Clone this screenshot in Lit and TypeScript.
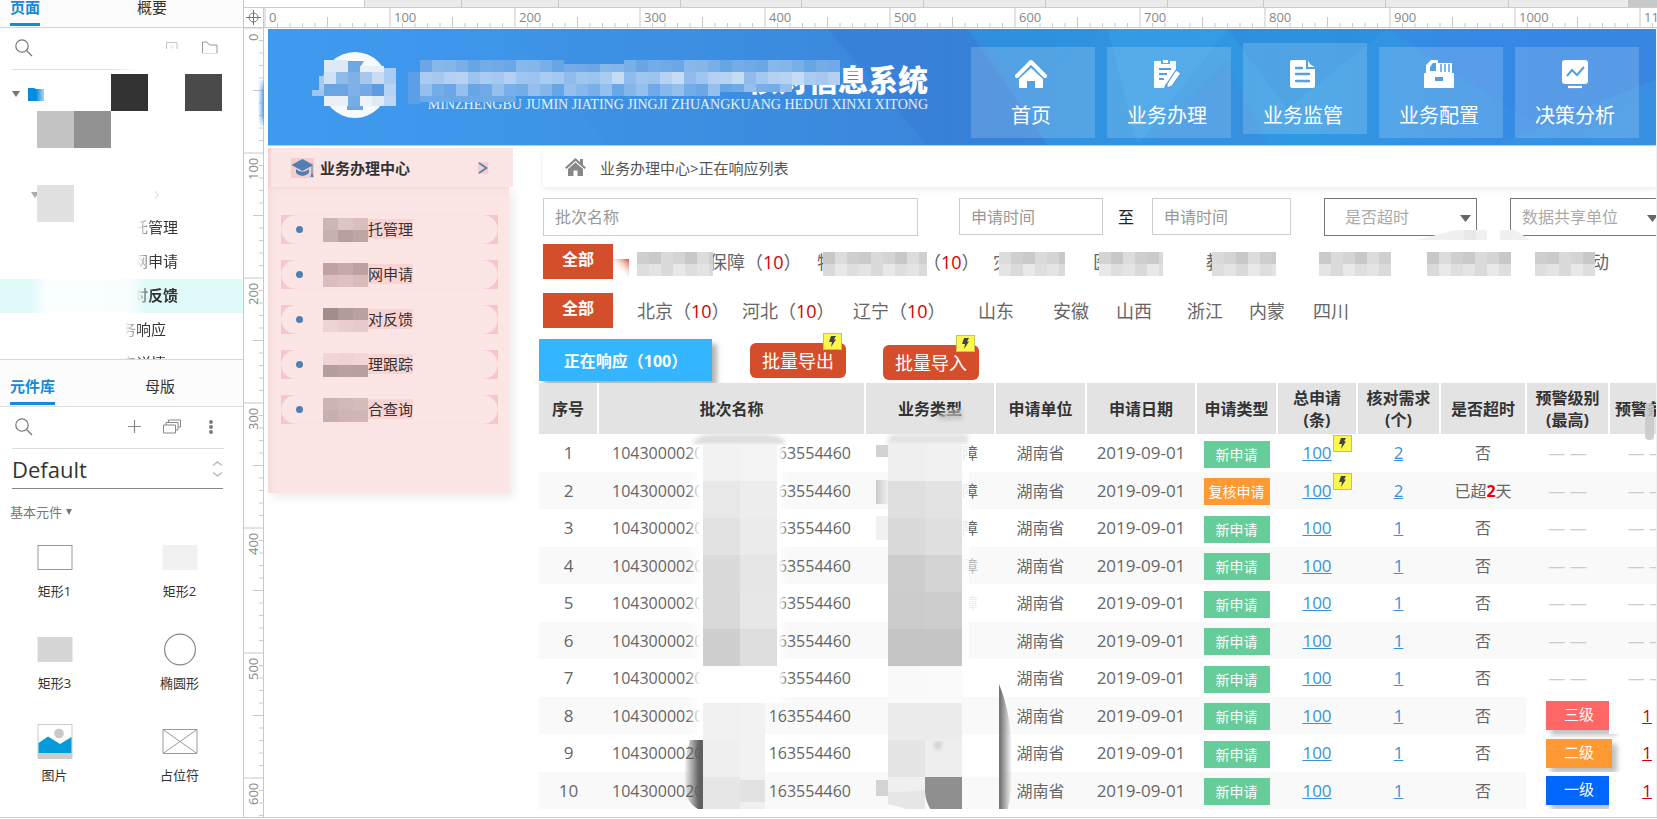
import { LitElement, html, svg, css, nothing } from "lit";
import { customElement } from "lit/decorators.js";
import { classMap } from "lit/directives/class-map.js";
import { styleMap } from "lit/directives/style-map.js";

const base = css`
  :host {
    display: block;
    box-sizing: border-box;
    font-family: "Open Sans", "Noto Sans CJK SC", sans-serif;
  }
  *, *::before, *::after { box-sizing: border-box; }
  button, input, select { font-family: inherit; margin: 0; }
  button { border: 0; padding: 0; background: none; cursor: pointer; }
  svg { display: block; flex: none; }
  ul { list-style: none; margin: 0; padding: 0; }
`;

type Cell = [number, number, number, number, string];
const cells = (list: Cell[]) =>
  list.map(([x, y, w, h, c]) => svg`<rect x=${x} y=${y} width=${w} height=${h} fill=${c}></rect>`);

const searchIcon = html`<svg width="18" height="18" viewBox="0 0 18 18" fill="none" stroke="#777" stroke-width="1.2">
  <circle cx="7" cy="7" r="6.2"></circle><path d="M11.5 11.5L17 17"></path></svg>`;

/* ---------- left side: page tree and widget library ---------- */

@customElement("tool-panels")
class ToolPanels extends LitElement {
  static styles = [base, css`
    :host { display: flex; flex-direction: column; border-right: 1px solid #c9c9c9; background: #fff; overflow: hidden; min-height: 0; }
    .pages { flex: none; height: 360px; overflow: hidden; border-bottom: 1px solid #d8d8d8; }
    .tabs { display: flex; align-items: flex-end; gap: 97px; height: 28px; padding: 0 0 1px 10px; background: #fcfcfc; border-bottom: 1px solid #d6d6d6; overflow: hidden; }
    .tabs.lib { height: 47px; gap: 90px; border-bottom: 1px solid #dedede; }
    .tab { font-size: 15px; line-height: 20px; padding-bottom: 6px; border-bottom: 3px solid transparent; color: #333; }
    .tab.on { color: #148bd6; font-weight: 700; border-bottom-color: #148bd6; }
    .tools { display: flex; align-items: center; height: 41px; padding: 0 24px 2px 15px; }
    .find { margin-right: auto; }
    .tools button + button { margin-left: 22px; }
    .tools .find + button { margin-left: 0; }
    .rule { height: 1px; margin: 0 19px 0 12px; background: #dcdcdc; }
    .rule.fade { background: linear-gradient(to right, #ddd, #ddd 45%, #fff 60%); }
    .tree { position: relative; }
    .root { display: flex; align-items: center; gap: 8px; height: 48px; padding-left: 12px; margin-bottom: 60px; }
    .group { display: flex; align-items: center; height: 33px; padding-left: 31px; }
    .page { display: flex; justify-content: flex-end; align-items: center; height: 34px; padding: 0 65px 4px 0; font-size: 15px; color: #333; }
    .page.near { padding-right: 77px; }
    .page.on { font-weight: 700; background: linear-gradient(to right, #e0f9f9 30px, #fafefe 46px, #f8fefe 130px, #e0f9f9 148px); }
    .name { mask-image: linear-gradient(to right, transparent 4px, #000 20px); }
    .blocks { position: absolute; left: 37px; top: 4px; }
    .library { flex: 1; min-height: 0; }
    .set { display: flex; justify-content: space-between; align-items: center; width: 211px; height: 39px; margin: 1px 20px 0 12px; border-bottom: 1px solid #888; font-size: 22px; color: #333; }
    .section { display: flex; align-items: center; gap: 4px; margin: 14px 0 18px 10px; font-size: 13px; line-height: 18px; color: #777; }
    .grid { display: grid; grid-template-columns: 85px 85px; column-gap: 40px; padding-left: 12px; }
    .widget { display: flex; flex-direction: column; align-items: center; gap: 6px; height: 92px; font-size: 13px; line-height: 18px; color: #333; }
  `];

  render() {
    const shapes = [
      ["矩形1", svg`<rect x="1" y="6.500" width="34" height="24" fill="#fff" stroke="#999"></rect>`],
      ["矩形2", svg`<rect x="0.500" y="6" width="35" height="25" fill="#f1f1f1"></rect>`],
      ["矩形3", svg`<rect x="0.500" y="6" width="35" height="25" fill="#d6d6d6"></rect>`],
      ["椭圆形", svg`<circle cx="18" cy="18.500" r="15.400" fill="#fff" stroke="#888" stroke-width="1.200"></circle>`],
      ["图片", svg`<rect x="1" y="1.500" width="34" height="34" fill="#fff" stroke="#ccc"></rect><rect x="1" y="30" width="34" height="5" fill="#ccc"></rect><circle cx="22" cy="10.500" r="4.800" fill="#c8c8c8"></circle><path d="M1.500 20L11 13.500L23 21L34.500 14V30H1.500Z" fill="#049bdc"></path>`],
      ["占位符", svg`<path d="M1 6.500H35V30.500H1ZL35 30.500M35 6.500L1 30.500" fill="none" stroke="#999"></path>`],
    ] as const;
    const pages = [["托管理", ""], ["网申请", ""], ["对反馈", "on"], ["务响应", "near"], ["申详情", "near"]];
    return html`
      <section class="pages">
        <div class="tabs"><button class="tab on">页面</button><button class="tab">概要</button></div>
        <div class="tools">
          <button class="find" aria-label="搜索页面">${searchIcon}</button>
          <button aria-label="添加页面"><svg width="14" height="14" viewBox="0 0 14 14" fill="none" stroke="#c4c4c4"><path d="M1.500 8V1.500H12V8"></path><path d="M5 6H9M7 4V8" stroke="#e8e8e8"></path></svg></button>
          <button aria-label="添加文件夹"><svg width="18" height="14" viewBox="0 0 18 14" fill="none" stroke="#999"><path d="M1.500 12V1H6L8.500 4H16V12"></path><path d="M1.500 12.500H16" stroke="#ddd"></path></svg></button>
        </div>
        <div class="rule fade"></div>
        <div class="tree">
          <div class="root">
            <svg width="8" height="6" viewBox="0 0 8 6"><path d="M0 0H8L4 6Z" fill="#777"></path></svg>
            <svg width="18" height="13" viewBox="0 0 18 13"><defs><linearGradient id="f"><stop offset=".5" stop-color="#048be0"></stop><stop offset="1" stop-color="#a8d8f5"></stop></linearGradient></defs><path d="M0 0H6L8 1H16V13H0Z" fill="url(#f)"></path></svg>
          </div>
          <div class="group">
            <svg width="8" height="6" viewBox="0 0 8 6"><path d="M0 0H8L4 6Z" fill="#aaa"></path></svg>
            <svg width="124" height="10" viewBox="0 0 124 10"><path d="M116 1L119 5L116 9" fill="none" stroke="#d8d8d8"></path></svg>
          </div>
          <ul>${pages.map(([t, c]) => html`<li class="page ${c}"><span class="name">${t}</span></li>`)}</ul>
          <svg class="blocks" width="185" height="148" viewBox="37 74 185 148">${cells([
            [111, 74, 37, 37, "#333"], [185, 74, 37, 37, "#4a4a4a"], [37, 111, 37, 37, "#c4c4c4"],
            [74, 111, 37, 37, "#929292"], [37, 185, 37, 37, "#e1e1e1"],
          ])}</svg>
        </div>
      </section>
      <section class="library">
        <div class="tabs lib"><button class="tab on">元件库</button><button class="tab">母版</button></div>
        <div class="tools">
          <button class="find" aria-label="搜索元件">${searchIcon}</button>
          <button aria-label="添加"><svg width="13" height="13" viewBox="0 0 13 13" stroke="#888" stroke-width="1.200"><path d="M6.500 0V13M0 6.500H13"></path></svg></button>
          <button aria-label="元件库列表"><svg width="18" height="15" viewBox="0 0 18 15" fill="#fff" stroke="#888"><path d="M5.500 1H17.500V8H5.500Z"></path><path d="M3 3.500H15V11H3Z"></path><path d="M0.500 6H12.500V14H0.500Z"></path></svg></button>
          <button aria-label="更多"><svg width="16" height="14" viewBox="0 0 16 14" fill="#777"><circle cx="8" cy="2" r="1.900"></circle><circle cx="8" cy="7" r="1.900"></circle><circle cx="8" cy="12" r="1.900"></circle></svg></button>
        </div>
        <div class="rule"></div>
        <button class="set">Default
          <svg width="12" height="18" viewBox="0 0 12 18" fill="none" stroke="#bbb" stroke-width="1.500"><path d="M2 5.500L6.500 2L11 5.500M2 12.500L6.500 16L11 12.500"></path></svg>
        </button>
        <div class="section">基本元件<svg width="6" height="6" viewBox="0 0 6 6"><path d="M0 0H6L3 6Z" fill="#777"></path></svg></div>
        <div class="grid">${shapes.map(([t, g]) => html`<div class="widget"><svg width="36" height="37" viewBox="0 0 36 37">${g}</svg>${t}</div>`)}</div>
      </section>`;
  }
}

/* ---------- rulers ---------- */

@customElement("canvas-ruler")
class CanvasRuler extends LitElement {
  static properties = { vertical: { type: Boolean } };
  declare vertical: boolean;
  static styles = [base, css`
    :host { overflow: hidden; background: #fff; }
    text { font-size: 13px; fill: #888; font-family: "Open Sans", sans-serif; }
  `];
  render() {
    const v = this.vertical;
    const count = v ? 66 : 240;
    const start = v ? 0 : 1;
    const marks = [];
    for (let i = 0; i < count; i++) {
      const p = start + i * 12.5;
      const len = i % 10 === 0 ? 20 : i % 5 === 0 ? 11 : 5;
      marks.push(v ? svg`<path d="M${20 - len} ${p}H20"></path>` : svg`<path d="M${p} ${20 - len}V20"></path>`);
    }
    const labels = [];
    for (let n = 0; n * 125 < count * 12.5; n++) {
      const p = start + n * 125 + 4;
      labels.push(v
        ? svg`<text transform="translate(14 ${p + (n === 0 ? 9 : 23)}) rotate(-90)">${n * 100}</text>`
        : svg`<text x=${p} y="14">${n * 100}</text>`);
    }
    const w = v ? 20 : 3000;
    const h = v ? 820 : 20;
    return html`<svg width=${w} height=${h} viewBox="0 0 ${w} ${h}">
      <g stroke="#c8c8c8" fill="none">${marks}<path d=${v ? "M19.500 0V820" : "M0 19.500H3000"}></path></g>${labels}
      ${v ? svg`<defs><linearGradient id="b"><stop offset="0" stop-color="#4b9df0" stop-opacity="0"></stop><stop offset="1" stop-color="#4b9df0"></stop></linearGradient>
        <filter id="s"><feGaussianBlur stdDeviation="0 6"></feGaussianBlur></filter></defs>
        <rect x="14" y="56" width="6" height="38" fill="url(#b)" filter="url(#s)"></rect>` : nothing}
    </svg>`;
  }
}

/* ---------- banner ---------- */

const navIcons = [
  svg`<path d="M2 17L16 3L30 17" fill="none" stroke="#fff" stroke-width="4" stroke-linecap="round" stroke-linejoin="round"></path><path d="M16 9L28 20V29H20V22H12V29H4V20Z" fill="#fff"></path>`,
  svg`<path d="M3 2H10V5H19V2H25V14L14 26L13 29H3Z" fill="#fff"></path><rect x="12" y="1" width="5" height="3" fill="#fff"></rect><path d="M8 10H20M8 15H16M8 20H13" stroke="#56a0e2" stroke-width="2"></path><path d="M25 11L30 14L21 27L16 29L16 25Z" fill="#fff" stroke="#56a0e2" stroke-width="1.200"></path>`,
  svg`<path d="M5 1H19V10H28V27Q28 29 26 29H5Q3 29 3 27V3Q3 1 5 1Z" fill="#fff"></path><path d="M21 1Q22 6 28 8H21Z" fill="#fff"></path><path d="M9 9H15M9 15H22M9 22H22" stroke="#56a0e2" stroke-width="2.400" stroke-linecap="round"></path>`,
  svg`<path d="M3 14V6L8 1H15V4H29V14H31V29H1V14Z" fill="#fff"></path><path d="M18 5V13M22 5V13M26 5V13" stroke="#56a0e2" stroke-width="1.500"></path><path d="M7 12V8L10 4H13V12Z" fill="#56a0e2"></path><rect x="12" y="18" width="8" height="4" fill="#56a0e2"></rect>`,
  svg`<rect x="3" y="1" width="26" height="24" rx="3" fill="#fff"></rect><path d="M8 17L13 11L18 16L25 8" fill="none" stroke="#56a0e2" stroke-width="2"></path><path d="M9 28H23" stroke="#fff" stroke-width="2.200"></path>`,
];

@customElement("site-banner")
class SiteBanner extends LitElement {
  static styles = [base, css`
    :host { position: relative; display: flex; height: 117px; border-bottom: 1px solid #a9d2f5; overflow: hidden;
      background: linear-gradient(to right, #3f9af0, #3c8fe2 30%, #3a86dc 48%, #3192e0 58%, #3099e3 75%, #358ce4 90%, #3689de); }
    .facets { position: absolute; inset: 0; width: 100%; height: 100%; }
    .brand { position: relative; display: flex; align-items: center; gap: 20px; padding: 0 0 4px 44px; }
    .words { width: 512px; padding-top: 6px; color: #fff; text-align: right; }
    .title { margin: 0; font-size: 30px; line-height: 34px; font-weight: 900; }
    .latin { font-family: "Liberation Serif", serif; font-size: 14px; line-height: 16px; white-space: nowrap; color: #e4f0fc; }
    .cover { position: absolute; left: 140px; top: 31px; }
    .nav { position: relative; display: flex; gap: 12px; margin-left: auto; padding: 18px 17px 0 0; }
    .item { display: flex; flex-direction: column; align-items: center; gap: 12px; width: 124px; height: 91px; padding: 12px 4px 0 0;
      font-size: 20px; line-height: 30px; color: #fff; background: rgba(255, 255, 255, .17); text-decoration: none; }
    .item.raised { margin-top: -4px; padding-top: 16px; }
  `];
  render() {
    const tone = ["#6ba7e6", "#79afe8", "#70a9e7", "#84b6ea", "#74ace8", "#86b8eb", "#68a5e5"];
    const pale = ["#a9ccf2", "#b7d3f4", "#9fc6f0", "#a4c8f0", "#c5dcf6", "#9cc3ee", "#b3d0f2", "#8fbcec"];
    const cover: Cell[] = [];
    for (let i = 0; i < 35; i++) {
      const x = 12 + i * 12;
      cover.push([x, i > 11 && i < 17 ? 4 : 0, 12, 12, tone[(i * 5) % 7]]);
      cover.push([x, 12, 12, 13, pale[(i * 3 + (i >> 2)) % 8]]);
      if (i < 31) cover.push([x, 24, 12, i > 24 ? 8 : 12, i % 3 ? tone[(i * 3 + 1) % 7] : "#95bfed"]);
    }
    cover.push([0, 12, 12, 32, "#5c9fe6"]);
    cover.push([12, 36, 96, 6, "#6ea9e7"]);
    return html`
      <svg class="facets" viewBox="0 0 1389 116" preserveAspectRatio="none">
        <path d="M560 0H700L780 116H660Z" fill="#3579d4" opacity=".5"></path>
        <path d="M240 0L340 116H0V0Z" fill="#46a0f2" opacity=".15"></path>
        <path d="M700 0H830L760 60Z" fill="#2b93df" opacity=".6"></path>
        <path d="M840 0H960L870 116Z" fill="#39a6ea" opacity=".4"></path>
        <path d="M960 0H1120L1020 80Z" fill="#2887da" opacity=".4"></path>
        <path d="M880 116L960 30L1000 116Z" fill="#3f86de" opacity=".4"></path>
        <path d="M1120 0H1389V60L1300 116Z" fill="#3a80e4" opacity=".35"></path>
        <path d="M1389 50V116H1230Z" fill="#3c9ce6" opacity=".4"></path>
      </svg>
      <div class="brand">
        <svg width="84" height="68" viewBox="312 51 84 68">
          <circle cx="355" cy="85" r="33" fill="#f7fafd"></circle>
          <path d="M346 61H364L361 66V106H363V110H347V106H350V66Z" fill="#6ea7e2"></path>
          ${cells([
            [324, 60, 24, 12, "#dfe9f6"], [348, 62, 12, 10, "#6ea7e2"], [360, 66, 24, 6, "#e8eff8"],
            [319, 76, 5, 14, "#a6caf0"], [324, 72, 12, 12, "#cfe2f6"], [336, 72, 12, 12, "#8fbbea"], [348, 72, 12, 12, "#7fb0e6"], [360, 72, 12, 12, "#a6c8ec"], [372, 72, 12, 12, "#c8dcf2"], [384, 68, 12, 16, "#a9ccf2"],
            [324, 84, 24, 12, "#6ba5e2"], [348, 84, 12, 12, "#7fb0e8"], [360, 84, 12, 12, "#74a9e4"], [372, 84, 12, 12, "#5b9ce2"], [384, 84, 12, 12, "#b5d3f4"],
            [312, 90, 12, 6, "#9fc6f0"], [324, 96, 24, 10, "#ebf0f8"], [348, 96, 12, 10, "#77ade6"], [360, 96, 12, 10, "#eef3f9"], [372, 96, 12, 10, "#dfeaf7"], [384, 96, 12, 10, "#bcd6f4"],
          ])}
        </svg>
        <div class="words">
          <h1 class="title">核对信息系统</h1>
          <div class="latin">MINZHENGBU JUMIN JIATING JINGJI ZHUANGKUANG HEDUI XINXI XITONG</div>
        </div>
        <svg class="cover" width="440" height="48" viewBox="0 0 440 48">${cells(cover)}</svg>
      </div>
      <nav class="nav">
        ${["首页", "业务办理", "业务监管", "业务配置", "决策分析"].map((t, i) => html`
          <a class=${classMap({ item: true, raised: i === 2 })} href="#"><svg width="32" height="30" viewBox="0 0 32 30">${navIcons[i]}</svg>${t}</a>`)}
      </nav>`;
  }
}

/* ---------- side menu ---------- */

@customElement("side-menu")
class SideMenu extends LitElement {
  static styles = [base, css`
    :host { width: 245px; flex: none; }
    .head { display: flex; align-items: center; height: 39px; padding: 0 25px 0 20px; background: #fbe6e5; border-left: 3px solid #f9d3d3; font-size: 15px; font-weight: 700; color: #333; }
    .head svg { background: #f7cccc; }
    .head .cap { margin-right: 6px; }
    .head .more { margin-left: auto; }
    .body { display: grid; gap: 16px; align-content: start; width: 241px; height: 306px; padding: 28px 11px 0 13px; background: #fbe6e5; box-shadow: 5px 5px 8px rgba(0, 0, 0, .07), inset 5px 4px 4px rgba(160, 60, 60, .04); }
    .entry { display: block; height: 29px; background: #f7c6c6; text-decoration: none; }
    .pill { display: flex; align-items: center; height: 29px; border-radius: 15px; background: #fbe6e5; border: 1px solid #fae2e2; padding-left: 14px; }
    .dot { width: 7px; height: 7px; border-radius: 50%; background: #4f7fb3; margin-right: 20px; }
    .text { font-size: 15px; line-height: 20px; color: #333; background: #fad3d3; margin: 0 0 2px -2px; }
  `];
  render() {
    const items: [string, string[]][] = [
      ["托管理", ["#cdb6b6", "#dfc4c4", "#d9bebe", "#c9b0b0", "#b89f9f", "#c0a5a5"]],
      ["网申请", ["#bfa3a3", "#c6a9a9", "#bda1a1", "#dabdbd", "#dfc1c1", "#d8bbbb"]],
      ["对反馈", ["#a28c8c", "#b39b9b", "#baa0a0", "#edd3d3", "#eacdcd", "#e6c9c9"]],
      ["理跟踪", ["#f1d5d5", "#efd2d2", "#f2d6d6", "#b69d9d", "#baa1a1", "#b89e9e"]],
      ["合查询", ["#ceb3b3", "#d3b8b8", "#d6bbbb", "#c9aeae", "#cfb4b4", "#d1b6b6"]],
    ];
    return html`
      <div class="head">
        <svg class="cap" width="23" height="20" viewBox="0 0 23 20" fill="#4f7fb3"><path d="M11.500 1L22.500 7L11.500 13L0.500 7Z"></path><path d="M5 11Q11.500 16.500 18 11V15Q11.500 21 5 15Z"></path><path d="M20.500 8H21.500V15L22.500 19H19.500L20.500 15Z"></path></svg>
        业务办理中心
        <svg class="more" width="10" height="12" viewBox="0 0 10 12" fill="none" stroke="#4f7fb3" stroke-width="1.800"><path d="M1 1L8.500 6L1 11"></path></svg>
      </div>
      <nav class="body">
        ${items.map(([t, c]) => html`<a class="entry" href="#"><span class="pill"><span class="dot"></span>
          <svg width="47" height="24" viewBox="0 0 47 24">${cells(c.map((k, i) => [(i % 3) * 15, i < 3 ? 0 : 12, 15, 12, k] as Cell))}</svg>
          <span class="text">${t}</span></span></a>`)}
      </nav>`;
  }
}

/* ---------- request list ---------- */

const bolt = html`<svg width="19" height="17" viewBox="0 0 19 17"><rect x="0.500" y="0.500" width="18" height="16" fill="#fdf84e" stroke="#c9c44f"></rect><path d="M8 3H13L11 6.500H13L8 14L9 9H6Z" fill="#444"></path></svg>`;

const grays = ["#cfcfcf", "#dcdcdc", "#c8c8c8", "#d4d4d4", "#dadada", "#cacaca"];
const patch = (w: number, seed: number, over = true) => html`<svg class=${classMap({ patch: true, over })} width=${w} height="24" viewBox="0 0 ${w} 24">${cells(
  Array.from({ length: Math.ceil(w / 12) * 2 }, (_, k) => {
    const i = k >> 1, low = k & 1;
    return [i * 12, low ? 12 : 0, 12, 12, low ? ["#dedede", "#e4e4e4", "#dadada", "#e8e8e8"][(i + seed) % 4] : grays[(i * 5 + seed) % 6]] as Cell;
  }))}</svg>`;

@customElement("request-list")
class RequestList extends LitElement {
  static styles = [base, css`
    :host { flex: 1; min-width: 0; overflow: hidden; }
    .crumb { display: flex; align-items: center; gap: 14px; height: 39px; margin-left: 4px; padding: 0 0 0 22px; font-size: 15px; color: #555; background: #fff; box-shadow: 0 2px 6px rgba(0, 0, 0, .08); }
    .crumb svg { margin-bottom: 2px; }
    .filters { position: relative; display: flex; align-items: flex-start; margin: 11px 0 8px 4px; height: 38px; font-size: 16px; }
    .box { flex: none; height: 38px; border: 1px solid #ccc; padding: 0 11px; font-size: 16px; color: #333; background: #fff; outline: 0; border-radius: 0; }
    .box::placeholder { color: #999; opacity: 1; }
    .name { width: 375px; margin-right: 41px; }
    .day { width: 144px; height: 37px; }
    .day.till { width: 139px; }
    .to { width: 16px; line-height: 38px; margin: 0 18px 0 15px; color: #222; }
    .drop { position: relative; flex: none; margin-left: 33px; }
    .pick { width: 153px; padding: 0 20px; border-color: #777; color: #aaa; appearance: none; }
    .pick.wide { width: 160px; padding-left: 11px; }
    .arrow { position: absolute; right: 6px; top: 17px; pointer-events: none; }
    .wide + .arrow { right: 12px; }
    .smear { position: absolute; left: 874px; top: 32px; }
    .facet { position: relative; display: flex; height: 35px; margin: 0 0 14px 4px; font-size: 18px; line-height: 27px; color: #666; }
    .all { flex: none; width: 70px; height: 35px; padding-bottom: 8px; margin-right: 24px; background: #d54e2b; color: #fff; font-size: 16px; font-weight: 700; }
    .opts { display: grid; padding-top: 5px; white-space: nowrap; }
    .areas { grid-template-columns: 105px 111px 125px 75px 63px 71px 62px 64px 60px; }
    .kinds { grid-template-columns: 180px 176px 100px 113px 113px 108px 108px 90px; }
    .opt { display: flex; align-items: flex-start; }
    .opt b { font-weight: 400; color: #d40000; }
    .patch { position: relative; margin: 3px -4px 0 0; }
    .patch.over { margin-left: -12px; }
    .spill { position: absolute; left: 70px; top: 15px; }
    .acts { display: flex; align-items: flex-start; height: 44px; margin-top: -3px; }
    .state { flex: none; width: 173px; height: 42px; background: #33b5ff; box-shadow: 5px 5px 5px rgba(0, 0, 0, .3); color: #fff; font-size: 16px; font-weight: 700; margin-right: 38px; }
    .act { position: relative; width: 96px; height: 35px; margin: 4px 37px 0 0; border-radius: 6px; background: #d54e2b; color: #fff; font-size: 18px; line-height: 33px; padding-top: 2px; }
    .act + .act { margin-top: 6px; }
    .act svg { position: absolute; right: 4px; top: -10px; }
    .sheet { position: relative; }
    table { table-layout: fixed; border-collapse: collapse; width: 1146px; font-size: 16px; color: #666; text-align: center; }
    th { height: 51px; padding: 0; line-height: 22px; color: #333; background: #e3e3e3; border-right: 2px solid #fff; white-space: nowrap; }
    td { position: relative; height: 38px; padding: 0; line-height: 24px; }
    .even td { height: 37px; background: #f9f9f9; }
    .even td.blank { background: #fff; }
    .long { font-size: 17px; }
    .code { display: flex; justify-content: space-between; padding: 0 14px; }
    .kind { text-align: right; padding-right: 17px; }
    .kind.dim { color: #bbb; }
    .kind.faint { color: #eee; }
    .link { font-size: 17px; color: #3a93d6; }
    .link.warn { color: #c00; }
    .tag { display: block; width: 66px; margin: 2px auto 0; font-size: 14px; line-height: 27px; color: #fff; background: #66cc99; }
    .tag.again { background: #ff9933; }
    .dash { font-size: 17px; color: #ccc; }
    .beyond { color: #e00; }
    .note { position: absolute; right: 5px; top: 1px; }
    .level { display: block; width: 66px; margin: 0 0 0 20px; font-size: 15px; line-height: 26px; padding-bottom: 3px; color: #fff; background: #ff6666; box-shadow: 5px 5px 5px rgba(0, 0, 0, .25); }
    .level.two { background: #ff9933; }
    .level.one { background: #0066ff; }
    .mask { position: absolute; left: 0; top: 0; }
    .thumb { position: absolute; right: 2px; top: 20px; width: 9px; height: 37px; border-radius: 4px; background: rgba(200, 200, 200, .85); }
  `];

  private row(n: number) {
    const level = ["三级", "二级", "一级"][n - 8];
    const dash = html`<span class="dash">— —</span>`;
    const kind = n === 4 ? "dim" : n === 5 ? "faint" : "";
    return html`<tr class=${n % 2 ? "odd" : "even"}>
      <td class="long">${n}</td>
      <td><div class="code"><span>1043000020</span><span>163554460</span></div></td>
      <td class="kind ${kind}">${n < 6 ? "障" : nothing}</td>
      <td>湖南省</td>
      <td class="long">2019-09-01</td>
      <td><span class=${classMap({ tag: true, again: n === 2 })}>${n === 2 ? "复核申请" : "新申请"}</span></td>
      <td><a class="link" href="#">100</a>${n < 3 ? html`<span class="note">${bolt}</span>` : nothing}</td>
      <td><a class="link" href="#">${n < 3 ? 2 : 1}</a></td>
      <td>${n === 2 ? html`已超<b class="beyond">2</b>天` : "否"}</td>
      <td class=${level ? "blank" : ""}>${level ? html`<span class="level ${["three", "two", "one"][n - 8]}">${level}</span>` : dash}</td>
      <td class=${level ? "blank" : ""}>${level ? html`<a class="link warn" href="#">1</a>` : dash}</td>
    </tr>`;
  }

  private mask() {
    const code = [["#f2f2f2", "#f3f3f3"], ["#e8e8e8", "#ededed"], ["#e2e2e2", "#ebebeb"], ["#dadada", "#e6e6e6"], ["#d9d9d9", "#e7e7e7"], ["#cfcfcf", "#dedede"], ["#fefefe", "#fefefe"], ["#f1f1f1", "#f2f2f2"], ["#efefef", "#f2f2f2"], ["#e6e6e6", "#f0f0f0"]];
    const kind = [["#efefef", "#f1f1f1"], ["#dfdfdf", "#e3e3e3"], ["#dadada", "#dfdfdf"], ["#cdcdcd", "#d4d4d4"], ["#cbcbcb", "#cdcdcd"], ["#c5c5c5", "#c5c5c5"], ["#f9f9f9", "#fafafa"], ["#ebebeb", "#ececec"], ["#e5e5e5", "#eeeeee"], ["#e6e6e6", "#8f8f8f"]];
    const list: Cell[] = [];
    code.forEach(([a, b], i) => {
      list.push([703, 444 + i * 37, 37, 37, a], [740, 444 + i * 37, i > 6 ? 25 : 37, 37, b]);
    });
    kind.forEach(([a, b], i) => {
      list.push([888, 444 + i * 37, 37, 37, a], [925, 444 + i * 37, 37, 37, b]);
    });
    list.push([962, 740, 37, 37, "#fefefe"]);
    return html`<svg class="mask" width="480" height="432" viewBox="539 383 480 432">
      <defs>
        <linearGradient id="l"><stop offset="0" stop-color="#fff" stop-opacity="0"></stop><stop offset=".8" stop-color="#fff"></stop></linearGradient>
        <linearGradient id="r"><stop offset=".2" stop-color="#fff"></stop><stop offset="1" stop-color="#fff" stop-opacity="0"></stop></linearGradient>
        <linearGradient id="dl"><stop offset="0" stop-color="#555" stop-opacity="0"></stop><stop offset=".8" stop-color="#606060"></stop></linearGradient>
        <linearGradient id="dr"><stop offset=".1" stop-color="#757575"></stop><stop offset="1" stop-color="#777" stop-opacity="0"></stop></linearGradient>
        <linearGradient id="top" x2="0" y2="1"><stop offset="0" stop-color="#e3e3e3"></stop><stop offset="1" stop-color="#d9d9d9"></stop></linearGradient>
        <linearGradient id="side"><stop offset="0" stop-color="#cacaca"></stop><stop offset="1" stop-color="#f0f0f0"></stop></linearGradient>
        <linearGradient id="fade" x2="0" y2="1"><stop offset="0" stop-color="#fff" stop-opacity="0"></stop><stop offset="1" stop-color="#fff"></stop></linearGradient>
        <filter id="soft"><feGaussianBlur stdDeviation="2"></feGaussianBlur></filter>
      </defs>
      <rect x="687" y="444" width="17" height="296" fill="url(#l)"></rect>
      <rect x="777" y="444" width="10" height="259" fill="url(#r)"></rect>
      <rect x="962" y="444" width="7" height="222" fill="#fff" opacity=".85"></rect>
      <path d="M692 444Q697 434 715 434H765Q782 434 786 444Z" fill="url(#top)" filter="url(#soft)"></path>
      <path d="M886 444L891 434H968V444Z" fill="#e2e2e2" filter="url(#soft)"></path>
      <path d="M938 414L962 408V420H938Z" fill="#bdbdbd" opacity=".7" filter="url(#soft)"></path>
      <rect x="876" y="445" width="12" height="12" fill="#d2d2d2"></rect>
      <rect x="876" y="480" width="12" height="24" fill="url(#side)"></rect>
      <rect x="876" y="516" width="12" height="24" fill="#f1f1f1"></rect>
      <path d="M703 740H690Q684 758 684 780Q684 805 703 811Z" fill="url(#dl)"></path>
      <path d="M999 684Q1012 715 1012 760Q1012 800 1006 814H999Z" fill="url(#dr)"></path>
      <path d="M990 670H1014V740H990Z" fill="url(#fade)" opacity="0"></path>
      ${cells(list)}
      <rect x="876" y="780" width="12" height="16" fill="#d4d4d4"></rect>
      <path d="M888 777H925V790Q910 792 888 792Z" fill="#f0f0f0"></path>
      <rect x="740" y="780" width="25" height="22" fill="#dcdcdc" opacity=".7"></rect>
      <path d="M925 777V814H934Q926 805 925 792M888 804L925 814H888Z" fill="#fafafa"></path>
      <path d="M933 742H943L938 752Z" fill="#bbb" opacity=".7" filter="url(#soft)"></path>
    </svg>`;
  }

  render() {
    const areas: [string, boolean][] = [["北京", true], ["河北", true], ["辽宁", true], ["山东", false], ["安徽", false], ["山西", false], ["浙江", false], ["内蒙", false], ["四川", false]];
    const heads: unknown[] = ["序号", "批次名称", "业务类型", "申请单位", "申请日期", "申请类型", html`总申请<br>(条)`, html`核对需求<br>(个)`, "是否超时", html`预警级别<br>(最高)`, "预警条数"];
    const widths = [59, 267, 130, 91, 110, 81, 80, 83, 86, 83, 76];
    const arrow = html`<svg class="arrow" width="11" height="8" viewBox="0 0 11 8"><path d="M0 0H11L5.500 7Z" fill="#666"></path></svg>`;
    return html`
      <div class="crumb">
        <svg width="21" height="18" viewBox="0 0 21 18" fill="#888"><path d="M10.500 0L15 4V1H18V7L21 9.500L19.500 11L10.500 3L1.500 11L0 9.500Z"></path><path d="M10.500 4.500L18 11V18H12.500V12.500H8.500V18H3V11Z"></path></svg>
        <span>业务办理中心&gt;正在响应列表</span>
      </div>
      <form class="filters">
        <input class="box name" placeholder="批次名称" aria-label="批次名称">
        <input class="box day" placeholder="申请时间" aria-label="申请时间起">
        <span class="to">至</span>
        <input class="box day till" placeholder="申请时间" aria-label="申请时间止">
        <span class="drop"><select class="box pick" aria-label="是否超时"><option>是否超时</option></select>${arrow}</span>
        <span class="drop"><select class="box pick wide" aria-label="数据共享单位"><option>数据共享单位</option></select>${arrow}</span>
        <svg class="smear" width="113" height="10" viewBox="0 0 113 10"><path d="M0 10L38 0H70V10Z" fill="#f0f0f0"></path><path d="M83 0H98L113 10H83Z" fill="#f0f0f0"></path><rect x="47" width="12" height="10" fill="#e8e8e8"></rect></svg>
      </form>
      <div class="facet">
        <button class="all">全部</button>
        <svg class="spill" width="16" height="26" viewBox="0 0 16 26"><defs><linearGradient id="sp" x1="1" y1="0" x2="0.300" y2="1"><stop offset="0" stop-color="#d54e2b"></stop><stop offset=".7" stop-color="#fff" stop-opacity="0"></stop></linearGradient></defs><path d="M0 0H16V22L0 8Z" fill="url(#sp)"></path></svg>
        <div class="opts kinds">
          <span class="opt">${patch(76, 0, false)}保障（<b>10</b>）</span>
          <span class="opt">特${patch(104, 2)}（<b>10</b>）</span>
          <span class="opt">灾${patch(66, 1)}</span>
          <span class="opt">医${patch(64, 3)}</span>
          <span class="opt">教${patch(64, 4)}</span>
          <span class="opt">${patch(72, 5, false)}</span>
          <span class="opt">${patch(84, 2, false)}</span>
          <span class="opt">${patch(60, 0, false)}动</span>
        </div>
      </div>
      <div class="facet">
        <button class="all">全部</button>
        <div class="opts areas">${areas.map(([t, c]) => html`<span class="opt">${t}${c ? html`（<b>10</b>）` : nothing}</span>`)}</div>
      </div>
      <div class="acts">
        <button class="state">正在响应（100）</button>
        <button class="act">批量导出${bolt}</button>
        <button class="act">批量导入${bolt}</button>
      </div>
      <div class="sheet">
        <table>
          <colgroup>${widths.map((w) => html`<col width=${w}>`)}</colgroup>
          <thead><tr>${heads.map((h) => html`<th>${h}</th>`)}</tr></thead>
          <tbody>${Array.from({ length: 10 }, (_, i) => this.row(i + 1))}</tbody>
        </table>
        ${this.mask()}
        <div class="thumb"></div>
      </div>`;
  }
}

/* ---------- shell ---------- */

@customElement("app-root")
class AppRoot extends LitElement {
  static styles = [base, css`
    :host { display: grid; grid-template: minmax(0, 1fr) 2px / 244px minmax(0, 1fr); height: 100vh; overflow: hidden; background: #fff; }
    .work { display: flex; flex-direction: column; min-width: 0; min-height: 0; }
    .files { flex: none; display: flex; height: 8px; border-bottom: 1px solid #ccc; background: #c8c8c8; }
    .file { flex: 1 1 0; background: #ebebeb; border-right: 1px solid #c8c8c8; }
    .file.on { background: #fff; }
    .end { width: 28px; }
    .top { flex: none; display: grid; grid-template-columns: 20px minmax(0, 1fr); height: 20px; }
    .corner { border: solid #ccc; border-width: 0 1px 1px 0; padding: 2px; }
    .main { flex: 1; min-height: 0; display: grid; grid-template-columns: 20px minmax(0, 1fr); }
    .canvas { padding: 1px 0 0 4px; min-width: 0; overflow: hidden; border-right: 1px solid #f1f1f1; }
    .body { display: flex; gap: 26px; margin-top: 2px; }
    .foot { grid-column: 1 / -1; border-top: 1px solid #ccc; }
  `];
  render() {
    const files = [121, 97, 97, 122, 121, 122, 122, 122, 96, 122, 123, 120];
    return html`
      <tool-panels></tool-panels>
      <div class="work">
        <div class="files">${files.map((w, i) => html`<div class=${classMap({ file: true, on: i === 0 })} style=${styleMap({ flexGrow: String(w) })}></div>`)}<div class="end"></div></div>
        <div class="top">
          <div class="corner"><svg width="15" height="15" viewBox="0 0 15 15" fill="none" stroke="#777"><circle cx="7.500" cy="7.500" r="4.500"></circle><path d="M7.500 0V15M0 7.500H15"></path></svg></div>
          <canvas-ruler></canvas-ruler>
        </div>
        <div class="main">
          <canvas-ruler vertical></canvas-ruler>
          <div class="canvas">
            <site-banner></site-banner>
            <div class="body"><side-menu></side-menu><request-list></request-list></div>
          </div>
        </div>
      </div>
      <div class="foot"></div>`;
  }
}
